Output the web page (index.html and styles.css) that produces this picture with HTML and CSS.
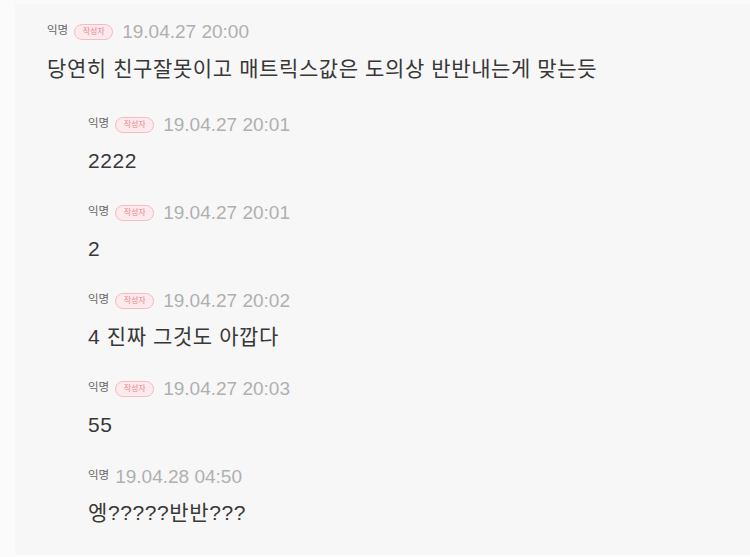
FILE: index.html
```html
<!DOCTYPE html>
<html lang="ko">
<head>
  <meta charset="UTF-8">
  <meta name="viewport" content="width=device-width, initial-scale=1.0">
  <title>댓글</title>
  <link rel="stylesheet" href="styles.css">
</head>
<body>
  <div class="thread">
    <div class="comment">
      <div class="meta">
        <span class="author">익명</span>
        <span class="badge">작성자</span>
        <span class="date">19.04.27 20:00</span>
      </div>
      <p class="text">당연히 친구잘못이고 매트릭스값은 도의상 반반내는게 맞는듯</p>
    </div>

    <div class="replies">
      <div class="comment reply">
        <div class="meta">
          <span class="author">익명</span>
          <span class="badge">작성자</span>
          <span class="date">19.04.27 20:01</span>
        </div>
        <p class="text">2222</p>
      </div>

      <div class="comment reply">
        <div class="meta">
          <span class="author">익명</span>
          <span class="badge">작성자</span>
          <span class="date">19.04.27 20:01</span>
        </div>
        <p class="text">2</p>
      </div>

      <div class="comment reply">
        <div class="meta">
          <span class="author">익명</span>
          <span class="badge">작성자</span>
          <span class="date">19.04.27 20:02</span>
        </div>
        <p class="text">4 진짜 그것도 아깝다</p>
      </div>

      <div class="comment reply">
        <div class="meta">
          <span class="author">익명</span>
          <span class="badge">작성자</span>
          <span class="date">19.04.27 20:03</span>
        </div>
        <p class="text">55</p>
      </div>

      <div class="comment reply">
        <div class="meta">
          <span class="author">익명</span>
          <span class="date">19.04.28 04:50</span>
        </div>
        <p class="text">엥?????반반???</p>
      </div>
    </div>
  </div>
</body>
</html>
```

FILE: styles.css
```css
* {
  box-sizing: border-box;
  margin: 0;
  padding: 0;
}

body {
  background: #fbfbfb;
  font-family: 'Liberation Sans', 'Noto Sans CJK KR', sans-serif;
  color: #3c3c3c;
  padding: 4px 0 2px 15px;
}

.thread {
  background: #f7f7f7;
  min-height: 551px;
  padding: 18px 0 0 32px;
}

.comment {
  display: flex;
  flex-direction: column;
  gap: 13px;
}

.meta {
  display: flex;
  align-items: flex-start;
  height: 20px;
}

.author {
  font-size: 11.5px;
  line-height: 13px;
  color: #666;
  margin-top: 2px;
  margin-right: 6px;
}

.badge {
  font-size: 8px;
  line-height: 14px;
  height: 16px;
  width: 39px;
  text-align: center;
  margin-top: 2px;
  margin-right: 9px;
  color: #e9848f;
  background: #fdeaed;
  border: 1px solid #f5bcc3;
  border-radius: 9px;
}

.date {
  font-size: 19px;
  line-height: 20px;
  color: #b0b0b0;
}

.text {
  font-size: 21px;
  line-height: 28px;
  letter-spacing: 0.6px;
  color: #383838;
}

.replies {
  margin-top: 32px;
  padding-left: 41px;
  display: flex;
  flex-direction: column;
  gap: 28px;
}

.reply {
  gap: 12px;
}
```
